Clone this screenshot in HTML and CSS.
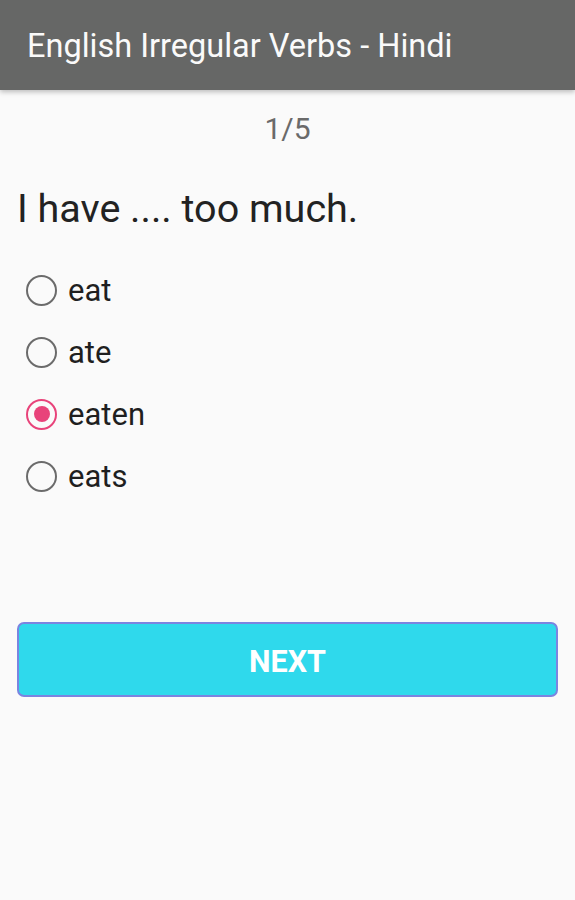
FILE: index.html
```html
<!DOCTYPE html>
<html>
<head>
<meta charset="utf-8">
<link rel="stylesheet" href="styles.css">
</head>
<body>
<header class="appbar">
  <h1 class="title">English Irregular Verbs - Hindi</h1>
</header>
<main class="content">
  <div class="counter">1/5</div>
  <div class="question">I have .... too much.</div>
  <ul class="options">
    <li class="option"><span class="radio"></span><span class="label">eat</span></li>
    <li class="option"><span class="radio"></span><span class="label">ate</span></li>
    <li class="option"><span class="radio checked"></span><span class="label">eaten</span></li>
    <li class="option"><span class="radio"></span><span class="label">eats</span></li>
  </ul>
  <button class="next">NEXT</button>
</main>
</body>
</html>
```

FILE: styles.css
```css
* { box-sizing: border-box; }
html, body { margin: 0; padding: 0; }
body {
  width: 575px;
  height: 900px;
  background: #fafafa;
  font-family: Roboto, "Noto Sans", sans-serif;
  overflow: hidden;
}
.appbar {
  height: 90px;
  background: #666766;
  display: flex;
  align-items: center;
  padding-left: 27px;
  box-shadow: 0 2px 5px rgba(0,0,0,0.25);
  position: relative;
}
.title {
  margin: 2px 0 0 0;
  font-size: 32.5px;
  font-weight: 400;
  color: #fafafa;
  line-height: 1.2;
}
.content {
  padding: 0 17px;
}
.counter {
  text-align: center;
  font-size: 30px;
  color: #6a6a6a;
  margin-top: 21px;
  line-height: 36px;
}
.question {
  font-size: 39.5px;
  color: #222;
  margin-top: 39px;
  line-height: 46px;
}
.options {
  list-style: none;
  margin: 37px 0 0 0;
  padding: 0 0 0 9px;
  display: flex;
  flex-direction: column;
  gap: 20px;
}
.option {
  display: flex;
  align-items: center;
  height: 42px;
  gap: 11px;
}
.radio {
  width: 31px;
  height: 31px;
  border-radius: 50%;
  border: 2.5px solid #6b6b6b;
  display: flex;
  align-items: center;
  justify-content: center;
  flex: none;
}
.radio.checked {
  border-color: #e8437a;
}
.radio.checked::after {
  content: "";
  width: 16px;
  height: 16px;
  border-radius: 50%;
  background: #e8437a;
}
.label {
  font-size: 31px;
  color: #1f1f1f;
  line-height: 1;
  margin-top: 1px;
}
.next {
  display: block;
  width: 100%;
  height: 75px;
  margin-top: 125px;
  padding-top: 5px;
  background: #2fd9ec;
  border: 2px solid #7b84e0;
  border-radius: 7px;
  color: #fff;
  font-family: Roboto, "Noto Sans", sans-serif;
  font-weight: 700;
  font-size: 30.5px;
}
```
